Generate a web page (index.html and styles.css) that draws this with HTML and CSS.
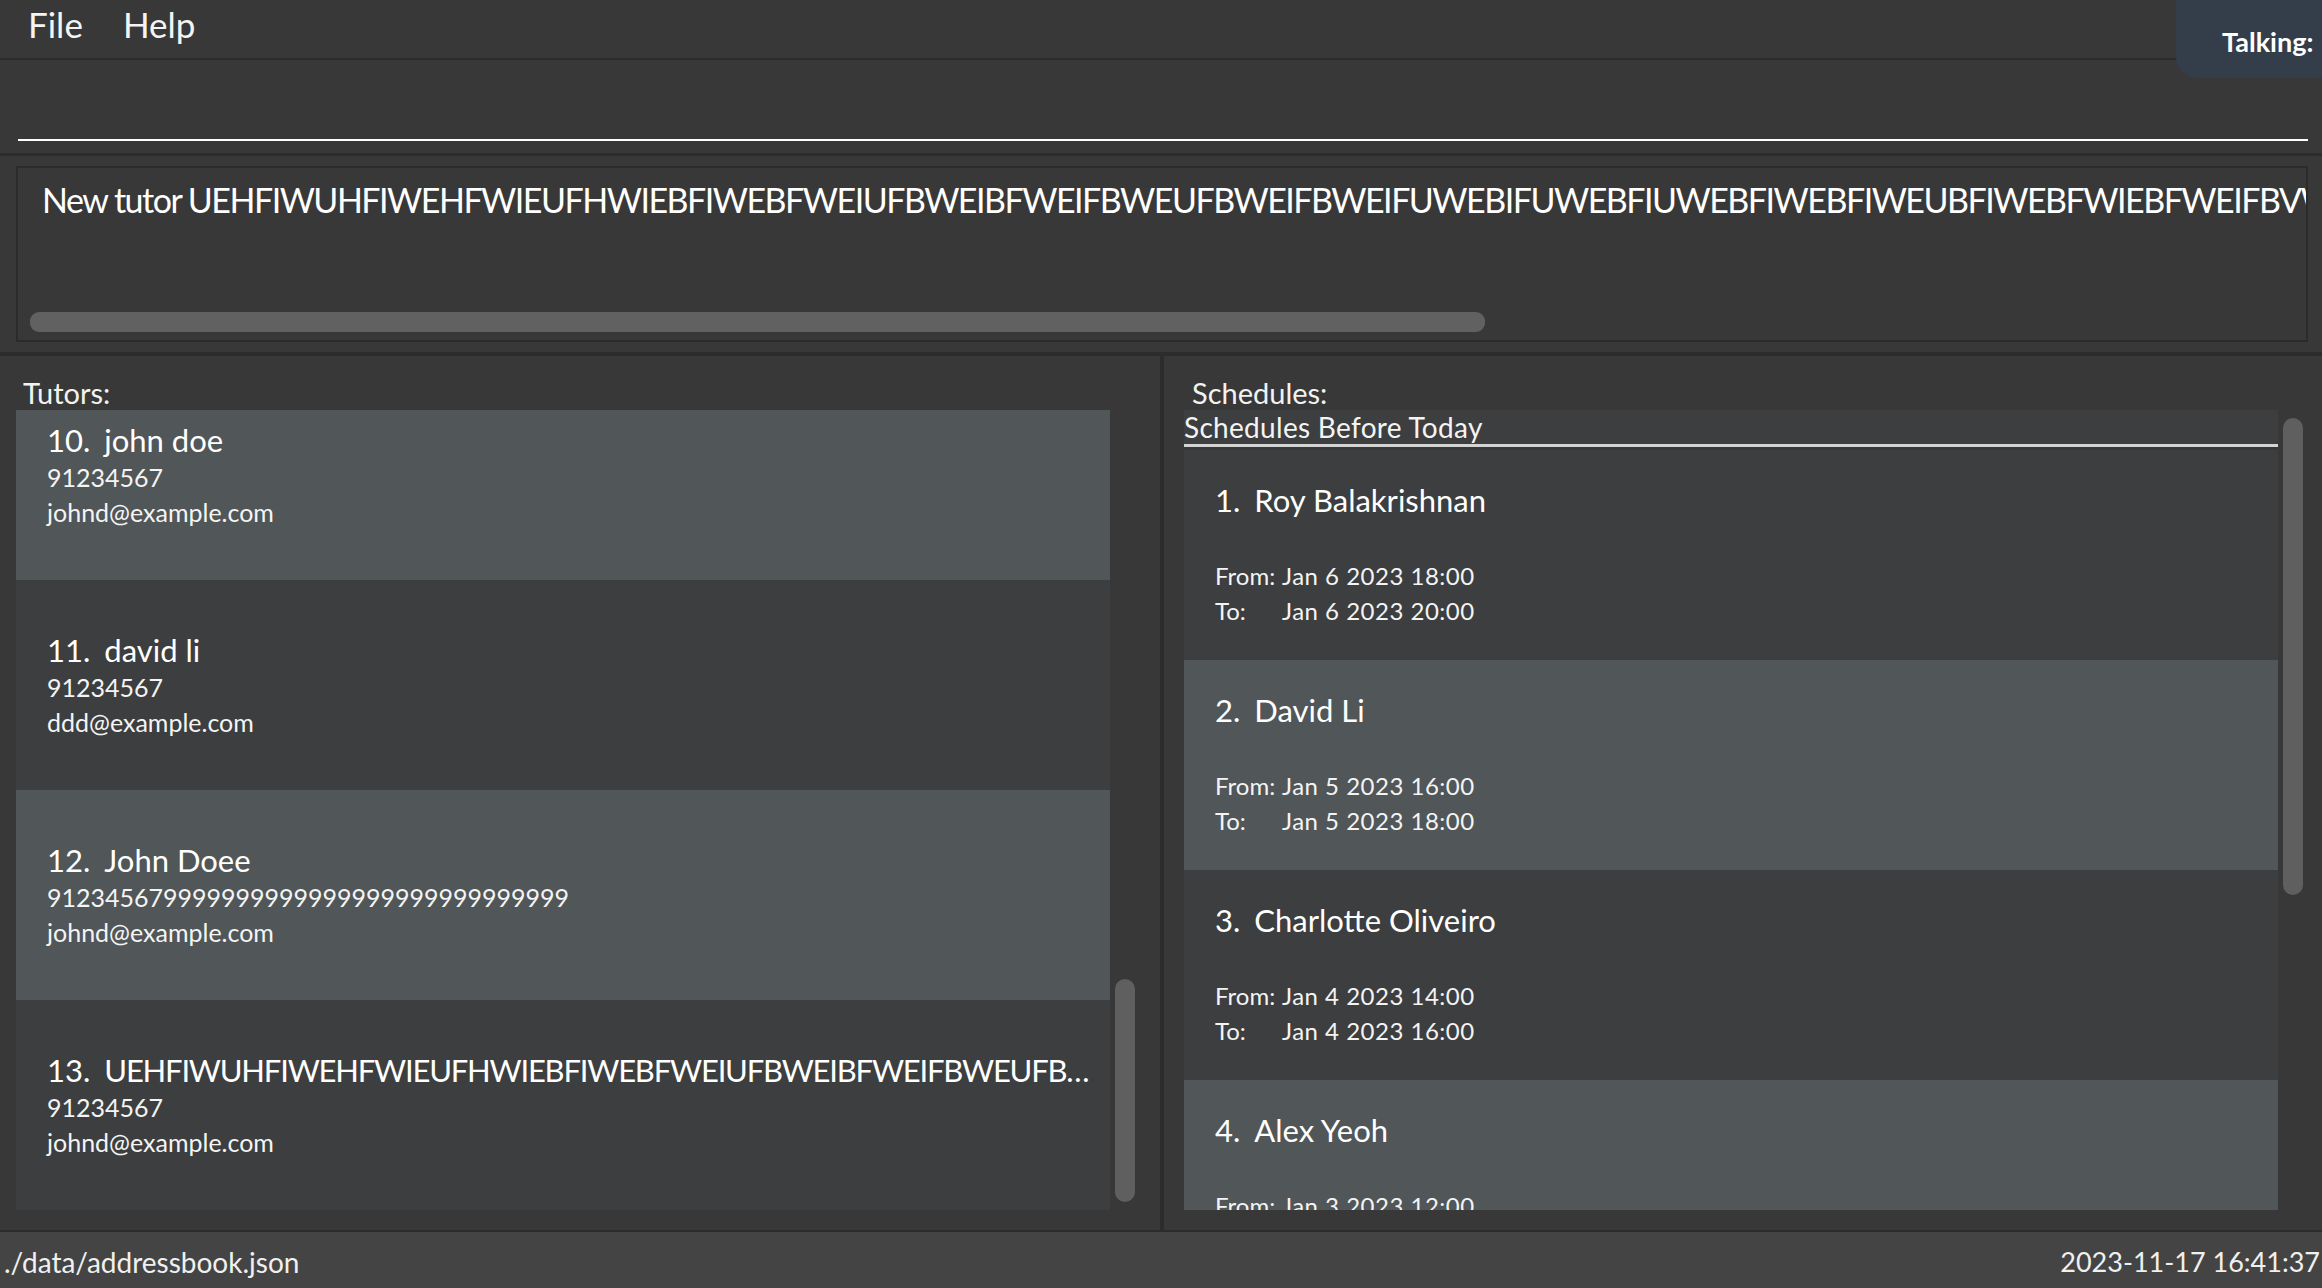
FILE: index.html
```html
<!DOCTYPE html>
<html lang="en">
<head>
<meta charset="utf-8">
<title>Address Book</title>
<link rel="stylesheet" href="styles.css">
</head>
<body>
<div class="app">
  <nav class="menubar">
    <span class="menu-item">File</span>
    <span class="menu-item">Help</span>
  </nav>

  <section class="command">
    <div class="command-field"></div>
  </section>

  <section class="result">
    <div class="result-box">
      <div class="result-text">New tutor UEHFIWUHFIWEHFWIEUFHWIEBFIWEBFWEIUFBWEIBFWEIFBWEUFBWEIFBWEIFUWEBIFUWEBFIUWEBFIWEBFIWEUBFIWEBFWIEBFWEIFBVWEIUFBWEIFBWEUIFBWEIUFBWEIFUBWEIF</div>
      <div class="hscroll"><div class="hscroll-thumb"></div></div>
    </div>
  </section>

  <main class="panes">
    <section class="pane pane-left">
      <div class="pane-label">Tutors:</div>
      <div class="list">
        <div class="list-viewport">
          <div class="list-content tutors-scrolled">
            <div class="tutor-card light">
              <div class="tutor-name"><span class="idx">10.</span>john doe</div>
              <div class="tutor-detail">91234567</div>
              <div class="tutor-detail">johnd@example.com</div>
            </div>
            <div class="tutor-card dark">
              <div class="tutor-name"><span class="idx">11.</span>david li</div>
              <div class="tutor-detail">91234567</div>
              <div class="tutor-detail">ddd@example.com</div>
            </div>
            <div class="tutor-card light">
              <div class="tutor-name"><span class="idx">12.</span>John Doee</div>
              <div class="tutor-detail">912345679999999999999999999999999999</div>
              <div class="tutor-detail">johnd@example.com</div>
            </div>
            <div class="tutor-card dark">
              <div class="tutor-name caps"><span class="idx">13.</span>UEHFIWUHFIWEHFWIEUFHWIEBFIWEBFWEIUFBWEIBFWEIFBWEUFBWEIFBWEIFUWEBIFUWEBFIUWEBFIWEBFIWEUBFIWEBFWIEBFWEIFBW</div>
              <div class="tutor-detail">91234567</div>
              <div class="tutor-detail">johnd@example.com</div>
            </div>
          </div>
        </div>
        <div class="vscroll vscroll-left"><div class="vscroll-thumb" style="margin-top:569px;height:223px"></div></div>
      </div>
    </section>

    <div class="pane-divider"></div>

    <section class="pane pane-right">
      <div class="pane-label">Schedules:</div>
      <div class="list">
        <div class="list-viewport">
          <div class="list-content">
            <div class="sched-header">Schedules Before Today</div>
            <div class="sched-card dark">
              <div class="sched-name"><span class="idx">1.</span>Roy Balakrishnan</div>
              <div class="sched-time"><span class="time-label">From:</span>Jan 6 2023 18:00</div>
              <div class="sched-time"><span class="time-label">To:</span>Jan 6 2023 20:00</div>
            </div>
            <div class="sched-card light">
              <div class="sched-name"><span class="idx">2.</span>David Li</div>
              <div class="sched-time"><span class="time-label">From:</span>Jan 5 2023 16:00</div>
              <div class="sched-time"><span class="time-label">To:</span>Jan 5 2023 18:00</div>
            </div>
            <div class="sched-card dark">
              <div class="sched-name"><span class="idx">3.</span>Charlotte Oliveiro</div>
              <div class="sched-time"><span class="time-label">From:</span>Jan 4 2023 14:00</div>
              <div class="sched-time"><span class="time-label">To:</span>Jan 4 2023 16:00</div>
            </div>
            <div class="sched-card light">
              <div class="sched-name"><span class="idx">4.</span>Alex Yeoh</div>
              <div class="sched-time"><span class="time-label">From:</span>Jan 3 2023 12:00</div>
              <div class="sched-time"><span class="time-label">To:</span>Jan 3 2023 14:00</div>
            </div>
          </div>
        </div>
        <div class="vscroll vscroll-right"><div class="vscroll-thumb" style="margin-top:8px;height:477px"></div></div>
      </div>
    </section>
  </main>

  <footer class="statusbar">
    <span class="status-path">./data/addressbook.json</span>
    <span class="status-time">2023-11-17 16:41:37</span>
  </footer>

  <div class="toast">Talking:</div>
</div>
</body>
</html>
```
FILE: styles.css
```css
html, body {
  margin: 0;
  padding: 0;
  width: 2322px;
  height: 1288px;
  overflow: hidden;
  background: #383838;
  font-family: Lato, "Open Sans", sans-serif;
  color: #ffffff;
}

.app {
  position: relative;
  width: 2322px;
  height: 1288px;
  display: flex;
  flex-direction: column;
  overflow: hidden;
}

/* menu bar */
.menubar {
  height: 58px;
  border-bottom: 2px solid #2c2c2c;
  display: flex;
  align-items: flex-start;
  padding-left: 8px;
  box-sizing: content-box;
  flex: none;
}
.menu-item {
  font-size: 35px;
  line-height: 49px;
  padding: 0 20px;
  color: #f4f4f4;
}

/* command box */
.command {
  height: 93px;
  padding: 0 14px 0 18px;
  flex: none;
}
.command-field {
  height: 79px;
  border-bottom: 2px solid #ffffff;
  box-sizing: content-box;
}

/* result display */
.result {
  border-top: 3px solid #2c2c2c;
  border-bottom: 4px solid #2c2c2c;
  padding: 10px 14px 10px 16px;
  flex: none;
}
.result-box {
  height: 176px;
  border: 2px solid #2b2b2b;
  box-sizing: border-box;
  display: flex;
  flex-direction: column;
  overflow: hidden;
}
.result-text {
  font-size: 34px;
  line-height: 44px;
  padding: 10px 0 0 24px;
  white-space: nowrap;
  overflow: hidden;
  color: #ffffff;
  letter-spacing: -1.5px;
}
.hscroll {
  margin-top: auto;
  padding: 0 0 8px 12px;
}
.hscroll-thumb {
  width: 1455px;
  height: 20px;
  border-radius: 9px;
  background: #616161;
}

/* panes */
.panes {
  flex: 1;
  display: flex;
  min-height: 0;
}
.pane {
  display: flex;
  flex-direction: column;
  padding-top: 20px;
}
.pane-left {
  width: 1160px;
  padding-left: 16px;
  box-sizing: border-box;
}
.pane-right {
  flex: 1;
  padding-left: 20px;
}
.pane-divider {
  width: 4px;
  background: #2c2c2c;
}
.pane-label {
  font-size: 29px;
  line-height: 34px;
  height: 34px;
  padding-left: 7px;
  color: #f2f2f2;
}
.pane-right .pane-label {
  padding-left: 8px;
}
.list {
  height: 800px;
  display: flex;
}
.list-viewport {
  overflow: hidden;
  height: 800px;
  width: 1094px;
}

.tutors-scrolled {
  margin-top: -40px;
}

.light { background: #515658; }
.dark { background: #3c3e3f; }

.tutor-card {
  height: 210px;
  box-sizing: border-box;
  padding: 50px 17px 0 31px;
}
.tutor-name {
  font-size: 31px;
  line-height: 40px;
  white-space: nowrap;
  overflow: hidden;
  text-overflow: ellipsis;
  color: #ffffff;
}
.tutor-name.caps {
  letter-spacing: -1.2px;
}
.tutor-name.caps .idx {
  letter-spacing: 0;
}
.idx {
  margin-right: 14px;
}
.tutor-detail {
  font-size: 25px;
  line-height: 35px;
  color: #f4f4f4;
}

.sched-header {
  height: 34px;
  font-size: 28px;
  line-height: 34px;
  letter-spacing: 0.3px;
  color: #f4f4f4;
  background: #3c3e3f;
  border-bottom: 3px solid #d4d4d4;
  margin-bottom: 3px;
  box-sizing: content-box;
}
.sched-card {
  height: 210px;
  box-sizing: border-box;
  padding: 30px 17px 0 31px;
}
.sched-name {
  font-size: 31px;
  line-height: 40px;
  margin-bottom: 38px;
  white-space: nowrap;
}
.sched-time {
  font-size: 24px;
  line-height: 35px;
  color: #f4f4f4;
  white-space: nowrap;
  letter-spacing: 0.5px;
}
.time-label {
  display: inline-block;
  width: 67px;
  letter-spacing: 0;
}

/* scrollbars */
.vscroll {
  display: flex;
  flex-direction: column;
}
.vscroll-left {
  width: 30px;
  padding-left: 5px;
  box-sizing: border-box;
}
.vscroll-right {
  width: 26px;
  padding-left: 5px;
  box-sizing: border-box;
}
.vscroll-thumb {
  width: 20px;
  border-radius: 10px;
  background: #5f5f5f;
}

/* status bar */
.statusbar {
  height: 56px;
  border-top: 2px solid #2c2c2c;
  background: #444444;
  display: flex;
  justify-content: space-between;
  align-items: flex-start;
  padding: 0 2px 0 4px;
  box-sizing: content-box;
  flex: none;
}
.status-path, .status-time {
  font-size: 27px;
  line-height: 56px;
  padding-top: 2px;
  color: #f0f0f0;
}
.status-path {
  font-size: 28px;
}

/* notification toast */
.toast {
  position: absolute;
  top: -20px;
  left: 2176px;
  width: 320px;
  height: 98px;
  box-sizing: border-box;
  padding: 44px 0 0 46px;
  background: #333e4a;
  border-radius: 22px;
  font-family: Lato, sans-serif;
  font-weight: 700;
  font-size: 27px;
  line-height: 36px;
  color: #ffffff;
}
```
